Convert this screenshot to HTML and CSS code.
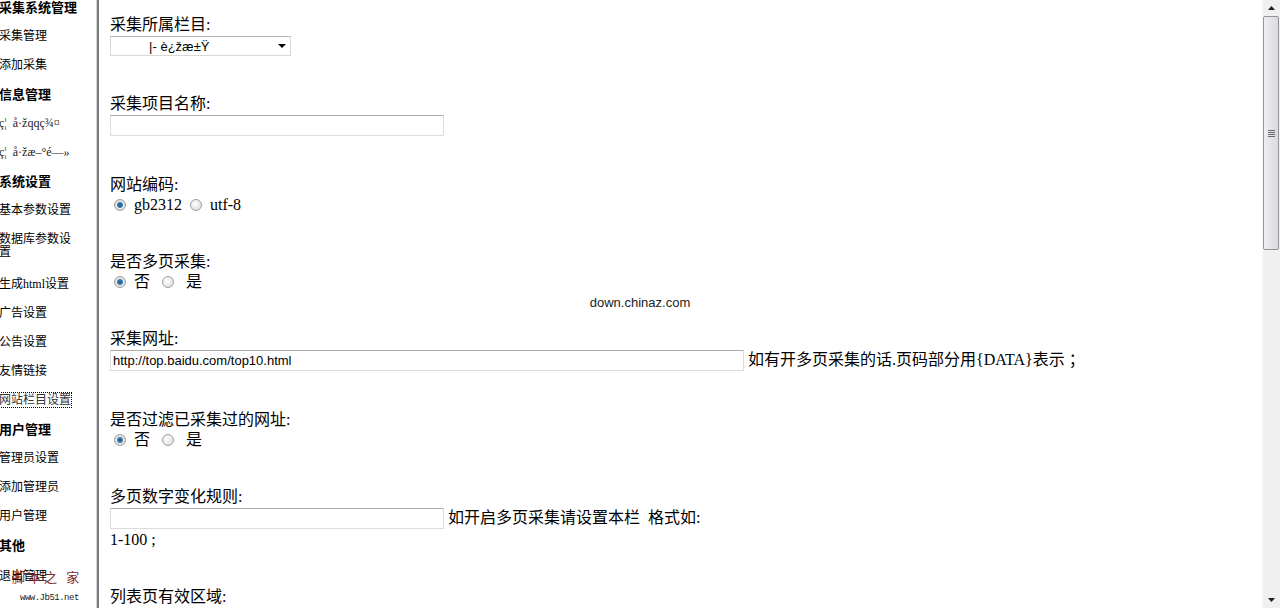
FILE: index.html
```html
<!DOCTYPE html>
<html>
<head>
	<meta charset="utf-8">
	<title>采集系统管理</title>
	<link rel="stylesheet" href="styles.css">
</head>
<body>
	<div id="menu">
		<ul class="group">
			<li class="caption">采集系统管理</li>
			<li><a href="#">采集管理</a></li>
			<li><a href="#">添加采集</a></li>
			<li class="caption">信息管理</li>
			<li><a href="#" class="garbled">ç¦&nbsp; å·žqqç¾¤</a></li>
			<li><a href="#" class="garbled">ç¦&nbsp; å·žæ–°é—»</a></li>
			<li class="caption">系统设置</li>
			<li><a href="#">基本参数设置</a></li>
			<li class="tall"><a href="#">数据库参数设置</a></li>
			<li><a href="#">生成html设置</a></li>
			<li><a href="#">广告设置</a></li>
			<li><a href="#">公告设置</a></li>
			<li><a href="#">友情链接</a></li>
			<li><a href="#" class="current">网站栏目设置</a></li>
			<li class="caption">用户管理</li>
			<li><a href="#">管理员设置</a></li>
			<li><a href="#">添加管理员</a></li>
			<li><a href="#">用户管理</a></li>
			<li class="caption">其他</li>
			<li class="last"><a href="#">退出管理</a></li>
		</ul>
		<div class="stamp">
			<span class="stamp_cn">脚本之 家</span>
			<span class="stamp_en">www.Jb51.net</span>
		</div>
	</div>

	<div id="xline"></div>

	<div id="main">
		<form class="collect">
			<div class="field">
				<div class="label">采集所属栏目:</div>
				<div class="row row_select">
					<span class="select_box">
						<select>
							<option>&nbsp;&nbsp;&nbsp;&nbsp;&nbsp;&nbsp;&nbsp;&nbsp;&nbsp;&nbsp;|- è¿žæ±Ÿ</option>
						</select>
					</span>
				</div>
			</div>

			<div class="field">
				<div class="label">采集项目名称:</div>
				<div class="row"><input type="text" class="text_short"></div>
			</div>

			<div class="field">
				<div class="label">网站编码:</div>
				<div class="row row_radio">
					<input type="radio" name="charset" checked> gb2312 <input type="radio" name="charset"> utf-8
				</div>
			</div>

			<div class="field">
				<div class="label">是否多页采集:</div>
				<div class="row row_radio">
					<input type="radio" name="multi" checked> 否&nbsp; <input type="radio" name="multi">&nbsp; 是
				</div>
			</div>

			<div class="field">
				<div class="label">采集网址:</div>
				<div class="row">
					<input type="text" class="text_long" value="http://top.baidu.com/top10.html"> 如有开多页采集的话.页码部分用{DATA}表示 ；
				</div>
			</div>

			<div class="field">
				<div class="label">是否过滤已采集过的网址:</div>
				<div class="row row_radio">
					<input type="radio" name="filter" checked> 否&nbsp; <input type="radio" name="filter">&nbsp; 是
				</div>
			</div>

			<div class="field field_tight">
				<div class="label">多页数字变化规则:</div>
				<div class="row row_wrap">
					<input type="text" class="text_short"> 如开启多页采集请设置本栏&nbsp; 格式如:<br>1-100 ;
				</div>
			</div>

			<div class="field">
				<div class="label">列表页有效区域:</div>
				<div class="row"><textarea rows="6"></textarea></div>
			</div>

			<div class="field">
				<div class="label">链接有效区域:</div>
				<div class="row"><textarea rows="6"></textarea></div>
			</div>
		</form>
	</div>

	<div class="scrollbar">
		<div class="sb_button">
			<svg width="7" height="4" viewBox="0 0 7 4"><path d="M3.5 0L7 4H0z" fill="#202020"/></svg>
		</div>
		<div class="sb_thumb">
			<svg width="7" height="7" viewBox="0 0 7 7"><path d="M0 .5h7M0 2.5h7M0 4.5h7M0 6.5h7" stroke="#6a6a6a" stroke-width="1"/></svg>
		</div>
		<div class="sb_track"></div>
		<div class="sb_button">
			<svg width="7" height="4" viewBox="0 0 7 4"><path d="M0 0H7L3.5 4z" fill="#202020"/></svg>
		</div>
	</div>

	<div class="watermark">down.chinaz.com</div>
</body>
</html>
```

FILE: styles.css
```css
html, body {
	margin: 0;
	height: 608px;
	overflow: hidden;
}

body {
	display: flex;
	background-color: #FFF;
	color: #000;
	font-family: "Liberation Serif", "Noto Sans CJK SC", serif;
}

/* left frame */

#menu {
	position: relative;
	width: 96px;
	flex: none;
	overflow: hidden;
}

.group {
	list-style: none;
	margin: -7px 0 0 -1px;
	padding: 0;
	width: 78px;
}

.group li {
	height: 15px;
	font-size: 12px;
	line-height: 15px;
	padding: 7px 0;
}

.group li.tall {
	height: 31px;
	line-height: 13px;
	padding: 8px 0 6px 0;
}

.group li.last {
	margin-top: 2px;
}

.group .caption {
	font-size: 13px;
	font-weight: bold;
}

.group a {
	color: #000;
	text-decoration: none;
}

.group a.garbled {
	color: #222;
}

.group a.current {
	color: #333;
	outline: 1px dotted #000;
}

.stamp {
	position: absolute;
	left: 12px;
	top: 570px;
	line-height: 15px;
}

.stamp_cn {
	display: block;
	font-size: 13px;
	letter-spacing: 3px;
	color: #6b0000;
	opacity: 0.85;
}

.stamp_en {
	display: block;
	margin: 6px 0 0 8px;
	font-family: "Liberation Mono", monospace;
	font-size: 9px;
	letter-spacing: -0.5px;
	color: #222;
}

#xline {
	flex: none;
	width: 2px;
	margin-right: 1px;
	background-color: #7A7A7A;
	border-left: 1px solid #D4D4D4;
}

/* right frame */

#main {
	flex: 1;
	height: 608px;
	overflow: hidden;
}

.collect {
	margin: 0;
	padding: 15px 10px 0 10px;
	font-size: 16px;
}

.field {
	margin-bottom: 37px;
}

.field_tight {
	margin-bottom: 36px;
}

.label {
	line-height: 20px;
}

.row {
	line-height: 22px;
	padding-bottom: 2px;
}

.row_select, .row_wrap {
	padding-bottom: 0;
}

.row_radio {
	line-height: 20px;
	padding-bottom: 0;
}

input[type="text"], textarea {
	box-sizing: border-box;
	height: 21px;
	margin: 1px 0 0 0;
	padding: 1px 2px;
	border: 1px solid #DCDCDC;
	border-top-color: #ABABAB;
	font-family: "Liberation Sans", sans-serif;
	font-size: 13px;
	vertical-align: top;
}

.text_short {
	width: 334px;
}

.text_long {
	width: 634px;
}

textarea {
	display: block;
	width: 500px;
	height: 110px;
	resize: none;
}

.select_box {
	position: relative;
	display: inline-block;
	margin-top: 1px;
	vertical-align: top;
	line-height: 0;
}

.select_box select {
	appearance: none;
	-webkit-appearance: none;
	box-sizing: border-box;
	width: 181px;
	height: 20px;
	margin: 0;
	padding: 0 0 0 2px;
	border: 1px solid #D8D8D8;
	border-top-color: #B5B5B5;
	background-color: #FFF;
	font-family: "Liberation Sans", sans-serif;
	font-size: 13px;
	color: #000;
}

.select_box:after {
	content: "";
	position: absolute;
	right: 5px;
	top: 8px;
	border-left: 4px solid transparent;
	border-right: 4px solid transparent;
	border-top: 4px solid #000;
	pointer-events: none;
}

input[type="radio"] {
	appearance: none;
	-webkit-appearance: none;
	box-sizing: border-box;
	width: 12px;
	height: 12px;
	margin: 0 4px 0 4px;
	border: 1px solid #A0A0A0;
	border-radius: 50%;
	background: radial-gradient(circle at 40% 40%, #FFF, #D6D6D6);
	vertical-align: -1px;
}

input[type="radio"]:checked {
	background: radial-gradient(circle, #1E5D8E 0, #3B7FB3 2.5px, #E8E8E8 3.5px, #C8C8C8 100%);
}

/* scrollbar of the right frame */

.scrollbar {
	flex: none;
	display: flex;
	flex-direction: column;
	width: 17px;
	background-color: #F0F0F0;
	border-left: 1px solid #FAFAFA;
}

.sb_button {
	display: flex;
	align-items: center;
	justify-content: center;
	height: 16px;
	flex: none;
}

.sb_thumb {
	display: flex;
	align-items: center;
	justify-content: center;
	box-sizing: border-box;
	height: 234px;
	flex: none;
	margin: 0 1px 0 0;
	border: 1px solid #959595;
	border-radius: 2px;
	background: linear-gradient(to right, #EFEFF2, #D9D9DE);
}

.sb_track {
	flex: 1;
}

.watermark {
	position: absolute;
	left: 0;
	right: 0;
	top: 295px;
	text-align: center;
	font-family: "Liberation Sans", sans-serif;
	font-size: 13px;
	color: #222;
	pointer-events: none;
}
```
